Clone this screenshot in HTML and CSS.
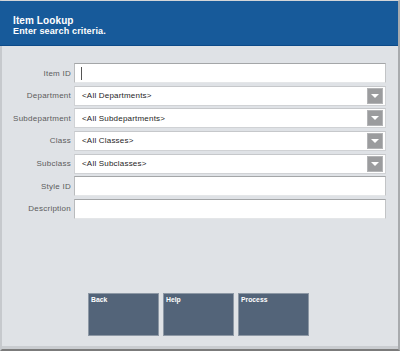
FILE: index.html
```html
<!DOCTYPE html>
<html>
<head>
<meta charset="utf-8">
<link rel="stylesheet" href="styles.css">
</head>
<body>
<div class="window">
  <div class="header">
    <div class="title">Item Lookup</div>
    <div class="subtitle">Enter search criteria.</div>
  </div>
  <div class="form">
    <div class="label">Item ID</div>
    <div class="field text"><span class="cursor"></span></div>
    <div class="label">Department</div>
    <div class="field select"><span class="value">&lt;All Departments&gt;</span><span class="drop"></span></div>
    <div class="label">Subdepartment</div>
    <div class="field select"><span class="value">&lt;All Subdepartments&gt;</span><span class="drop"></span></div>
    <div class="label">Class</div>
    <div class="field select"><span class="value">&lt;All Classes&gt;</span><span class="drop"></span></div>
    <div class="label">Subclass</div>
    <div class="field select"><span class="value">&lt;All Subclasses&gt;</span><span class="drop"></span></div>
    <div class="label">Style ID</div>
    <div class="field text"></div>
    <div class="label">Description</div>
    <div class="field text"></div>
  </div>
  <div class="spacer"></div>
  <div class="buttons">
    <div class="btn">Back</div>
    <div class="btn">Help</div>
    <div class="btn">Process</div>
  </div>
  <div class="strip"></div>
</div>
</body>
</html>
```
FILE: styles.css
```css
html, body {
  margin: 0;
  padding: 0;
  background: #dfe2e6;
}
.window {
  width: 400px;
  height: 351px;
  box-sizing: border-box;
  background: #dfe2e6;
  border-top: 1px solid #d3d5d8;
  border-left: 2px solid #c6c9cd;
  border-right: 2px solid #a8abae;
  border-bottom: 2px solid #7b7b7b;
  display: flex;
  flex-direction: column;
  font-family: "Liberation Sans", Arial, sans-serif;
}
.header {
  height: 45px;
  box-sizing: border-box;
  background: #175a9a;
  border-bottom: 1px solid #0c4a88;
  margin-left: -2px;
  padding: 14px 0 0 13px;
  color: #fff;
  font-weight: bold;
  flex: none;
}
.title {
  font-size: 10px;
  line-height: 11px;
  letter-spacing: 0.1px;
}
.subtitle {
  font-size: 9px;
  line-height: 10px;
  letter-spacing: 0.15px;
}
.form {
  margin-top: 17px;
  display: grid;
  grid-template-columns: 69px 312px;
  grid-auto-rows: 20px;
  column-gap: 3px;
  row-gap: 2.67px;
}
.label {
  font-size: 8px;
  color: #5c5c5c;
  text-align: right;
  display: flex;
  align-items: center;
  justify-content: flex-end;
  letter-spacing: 0.25px;
}
.field {
  box-sizing: border-box;
  height: 20px;
  background: #fff;
  display: flex;
  align-items: center;
  position: relative;
}
.text {
  border-top: 1px solid #a4a6a8;
  border-left: 1px solid #b9bbbd;
  border-right: 1px solid #c2c4c6;
  border-bottom: 1px solid #e4e6e8;
}
.select {
  border: 1px solid #d0d2d5;
  border-top-color: #c6c8cb;
}
.cursor {
  display: block;
  width: 1px;
  height: 13px;
  background: #555;
  margin-left: 6px;
}
.value {
  font-size: 8px;
  color: #1e1e1e;
  padding-left: 7px;
  letter-spacing: 0.2px;
}
.drop {
  position: absolute;
  right: 2px;
  top: 1px;
  width: 16px;
  height: 16px;
  box-sizing: border-box;
  background: #9b9c9e;
  border: 1px solid #b3b4b6;
}
.drop::after {
  content: "";
  position: absolute;
  left: 3px;
  top: 5px;
  border-left: 4px solid transparent;
  border-right: 4px solid transparent;
  border-top: 4px solid #fff;
}
.spacer {
  flex: 1;
}
.buttons {
  display: flex;
  gap: 4px;
  padding-left: 86px;
  margin-bottom: 10px;
}
.btn {
  width: 71px;
  height: 43px;
  box-sizing: border-box;
  background: #536479;
  border: 1px solid #8d98a5;
  color: #fff;
  font-size: 6.8px;
  font-weight: bold;
  line-height: 8px;
  padding: 2px 2px;
}
.strip {
  height: 3px;
  background: #c9ccd0;
  flex: none;
}
```
